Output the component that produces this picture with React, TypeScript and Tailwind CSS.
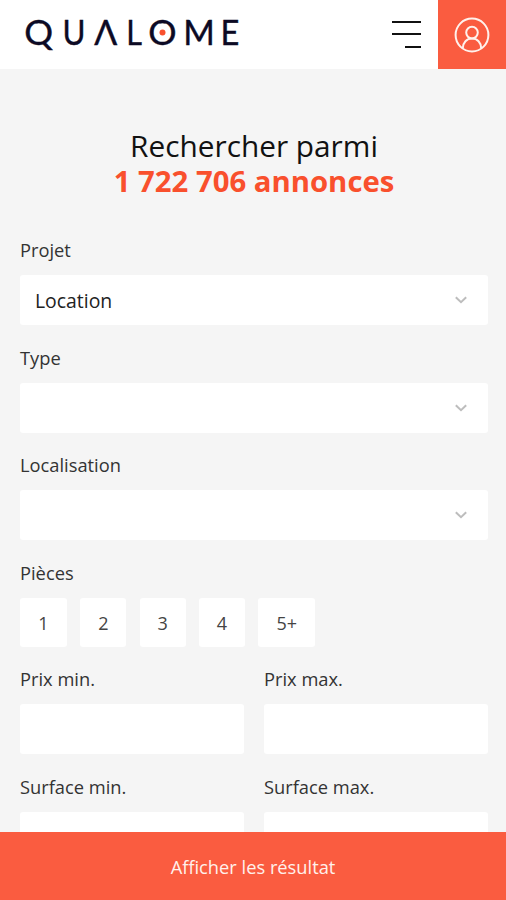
import type { ReactNode } from "react";

const selects = [
  { label: "Projet", value: "Location" },
  { label: "Type", value: "" },
  { label: "Localisation", value: "" },
];

const rooms = [
  { label: "1", width: "w-[47px]" },
  { label: "2", width: "w-[46px]" },
  { label: "3", width: "w-[46px]" },
  { label: "4", width: "w-[46px]" },
  { label: "5+", width: "w-[57px]" },
];

const ranges = ["Prix min.", "Prix max.", "Surface min.", "Surface max."];

const logoLetters = [
  { char: "Q", x: 38.7, stretch: 1.06 },
  { char: "U", x: 74, stretch: 0.92 },
  { char: "Λ", x: 105.7, stretch: 1 },
  { char: "L", x: 134.2, stretch: 0.9 },
  { char: "O", x: 162.5, stretch: 1.04 },
  { char: "M", x: 199, stretch: 1 },
  { char: "E", x: 230, stretch: 0.96 },
];

function Logo() {
  return (
    <svg width="250" height="68" viewBox="0 0 250 68" role="img" aria-label="Qualome">
      <g
        className="font-['Lato',sans-serif] text-[34px]"
        fill="#0c0a24"
        stroke="#0c0a24"
        strokeWidth="0.4"
        textAnchor="middle"
      >
        {logoLetters.map((letter) => (
          <text key={letter.char} transform={`translate(${letter.x} 44.6) scale(${letter.stretch} 1)`}>
            {letter.char}
          </text>
        ))}
      </g>
      <circle cx="162.5" cy="32.4" r="3" fill="#f9502d" />
    </svg>
  );
}

function Header() {
  return (
    <header className="flex h-[69px] shrink-0 justify-between bg-white">
      <Logo />
      <div className="flex">
        <button className="mr-[17px] flex w-[29px] flex-col items-end pt-[21px]" aria-label="Menu">
          <span className="h-[2px] w-full bg-[#111]" />
          <span className="mt-[10px] h-[2px] w-full bg-[#111]" />
          <span className="mt-[11px] h-[2px] w-4 bg-[#111]" />
        </button>
        <button className="flex w-[68px] items-center justify-center bg-[#fa5c40]" aria-label="Compte">
          <svg width="36" height="36" viewBox="0 0 36 36" fill="none" stroke="#fff1ec" strokeWidth="2">
            <circle cx="18" cy="18" r="16.4" />
            <circle cx="18" cy="15.6" r="5.8" />
            <path d="M8.8 31.2C9 25.6 12.6 21.6 18 21.6s9 4 9.2 9.6" />
          </svg>
        </button>
      </div>
    </header>
  );
}

function Field({ label, children }: { label: string; children?: ReactNode }) {
  return (
    <div>
      <div className="mb-[13px] h-6 text-[18.3px] leading-6 text-[#333]">{label}</div>
      {children}
    </div>
  );
}

export default function App() {
  return (
    <div className="flex h-[900px] w-[506px] flex-col overflow-hidden bg-[#f5f5f5] font-['Open_Sans',sans-serif]">
      <Header />

      <main className="min-h-0 flex-1 overflow-hidden pl-5 pr-[18px] pt-[59px]">
        <h1 className="text-center text-[29.8px] leading-[35px] text-[#111]">
          <span className="block">Rechercher parmi</span>
          <strong className="block pt-px text-[29.3px] font-bold text-[#f9502d]">1 722 706 annonces</strong>
        </h1>

        <div className="mt-[39px] flex flex-col gap-[20.5px]">
          {selects.map((select) => (
            <Field key={select.label} label={select.label}>
              <div className="flex h-[50px] items-center justify-between rounded-[3px] bg-white pl-[15px] pr-5 text-[19.4px] text-[#222]">
                <span className="pt-px">{select.value}</span>
                <svg width="14" height="10" viewBox="0 0 14 10" fill="none" stroke="#bdbdbd" strokeWidth="2">
                  <path d="M1.8 2.3 7 7.2l5.2-4.9" />
                </svg>
              </div>
            </Field>
          ))}

          <Field label="Pièces">
            <div className="flex gap-[13.3px]">
              {rooms.map((room) => (
                <button
                  key={room.label}
                  className={`${room.width} h-[49px] rounded-[3px] bg-white pt-[2px] text-[18px] text-[#444]`}
                >
                  {room.label}
                </button>
              ))}
            </div>
          </Field>

          <div className="grid grid-cols-2 gap-x-5 gap-y-[20.5px]">
            {ranges.map((range) => (
              <Field key={range} label={range}>
                <div className="h-[50px] rounded-[3px] bg-white" />
              </Field>
            ))}
          </div>
        </div>
      </main>

      <button className="h-[68px] shrink-0 bg-[#fa5c40] pt-[2px] text-[18.3px] text-[#fff1ec]">
        Afficher les résultat
      </button>
    </div>
  );
}
